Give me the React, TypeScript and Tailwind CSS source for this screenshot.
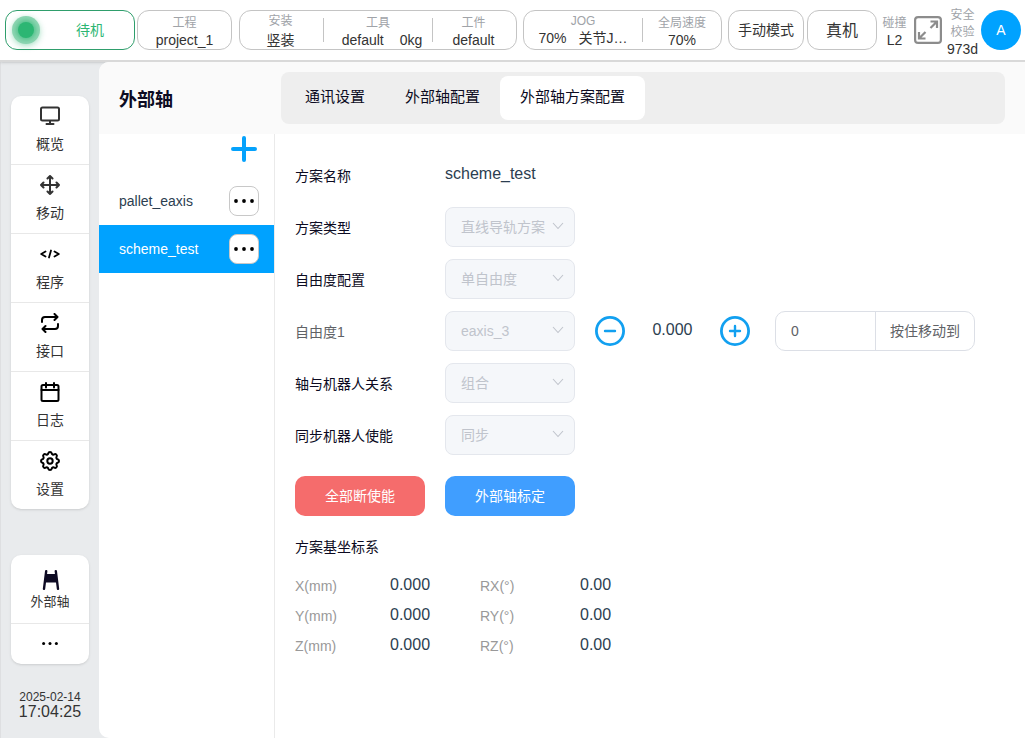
import { useState } from 'react';
import type { ReactNode } from 'react';
import clsx from 'clsx';

const Icon = ({ children, className = 'size-5' }: { children: ReactNode; className?: string }) => (
  <svg
    className={className}
    viewBox="0 0 20 20"
    fill="none"
    stroke="currentColor"
    strokeWidth="2"
    strokeLinecap="round"
    strokeLinejoin="round"
    aria-hidden="true"
  >
    {children}
  </svg>
);

const MonitorIcon = () => (
  <Icon className="size-5 text-[#333]">
    <rect x="1" y="1.5" width="18" height="13" rx="1.5" />
    <path d="M10 15v3M6.5 18h7" />
  </Icon>
);

const MoveIcon = () => (
  <Icon className="size-5 text-[#333]">
    <path d="M10 1v18M1 10h18M7.5 3.5 10 1l2.5 2.5M7.5 16.5 10 19l2.5-2.5M3.5 7.5 1 10l2.5 2.5M16.5 7.5 19 10l-2.5 2.5" />
  </Icon>
);

const CodeIcon = () => (
  <Icon className="size-5 text-black">
    <path d="M5.5 7.5 1.2 10l4.3 2.5M14.5 7.5l4.3 2.5-4.3 2.5M11 6.5l-2 7" strokeWidth="1.8" />
  </Icon>
);

const RepeatIcon = () => (
  <Icon className="size-5 text-black">
    <path d="M2 9V7a3 3 0 0 1 3-3h12M14.5 1l3 3-3 3M18 11v2a3 3 0 0 1-3 3H3M5.5 13l-3 3 3 3" />
  </Icon>
);

const CalendarIcon = () => (
  <Icon className="size-5 text-black">
    <rect x="1.5" y="3" width="17" height="16" rx="1.5" />
    <path d="M1.5 8h17M6 1v4.5M14 1v4.5" />
  </Icon>
);

const GearIcon = () => (
  <svg
    className="size-5 text-black"
    viewBox="2 2 20 20"
    fill="none"
    stroke="currentColor"
    strokeWidth="2"
    strokeLinejoin="round"
    aria-hidden="true"
  >
    <path d="M10.325 4.317c.426-1.756 2.924-1.756 3.35 0a1.724 1.724 0 0 0 2.573 1.066c1.543-.94 3.31.826 2.37 2.37a1.724 1.724 0 0 0 1.065 2.572c1.756.426 1.756 2.924 0 3.35a1.724 1.724 0 0 0-1.066 2.573c.94 1.543-.826 3.31-2.37 2.37a1.724 1.724 0 0 0-2.572 1.065c-.426 1.756-2.924 1.756-3.35 0a1.724 1.724 0 0 0-2.573-1.066c-1.543.94-3.31-.826-2.37-2.37a1.724 1.724 0 0 0-1.065-2.572c-1.756-.426-1.756-2.924 0-3.35a1.724 1.724 0 0 0 1.066-2.573c-.94-1.543.826-3.31 2.37-2.37 1 .608 2.296.07 2.572-1.065z" />
    <circle cx="12" cy="12" r="2.7" />
  </svg>
);

const RackIcon = () => (
  <svg className="size-5 text-[#0e0b24]" viewBox="0 0 20 20" aria-hidden="true">
    <path d="M6 4h10l.8 8.500H5.200z" fill="currentColor" />
    <path d="M6.200 1.200 4 18.800M15.800 1.200 18 18.800" stroke="currentColor" strokeWidth="2.4" strokeLinecap="round" />
  </svg>
);

const DotsIcon = ({ className = 'w-5' }: { className?: string }) => (
  <svg className={className} viewBox="0 0 20 4" fill="currentColor" aria-hidden="true">
    <circle cx="2" cy="2" r="1.9" />
    <circle cx="10" cy="2" r="1.9" />
    <circle cx="18" cy="2" r="1.9" />
  </svg>
);

const FullscreenIcon = () => (
  <svg className="size-7" viewBox="0 0 28 28" fill="none" stroke="#8c8c8c" strokeWidth="2.2" aria-hidden="true">
    <rect x="1.1" y="1.1" width="25.8" height="25.8" rx="3" />
    <path d="M16.500 5.500h6.500v6.500M22.500 6l-6 6M11.500 22.500H5v-6.500M5.500 22l6-6" />
  </svg>
);

const ChevronIcon = () => (
  <svg
    className="pointer-events-none absolute top-3.5 right-2.5 h-2.5 w-3.5"
    viewBox="0 0 14 10"
    fill="none"
    stroke="#c0c4cc"
    strokeWidth="1.1"
    aria-hidden="true"
  >
    <path d="M2 2l5 5.5L12 2" />
  </svg>
);

interface StatProps {
  label: string;
  tall?: boolean;
  className?: string;
  children: ReactNode;
}

const Stat = ({ label, tall = false, className, children }: StatProps) => (
  <div className={clsx('flex flex-col items-center justify-center whitespace-nowrap', className)}>
    <span className="text-xs leading-[17px] text-[#a0a3a8]">{label}</span>
    <span className={clsx('flex text-sm text-[#333]', tall ? 'leading-5' : 'leading-[17px]')}>
      {children}
    </span>
  </div>
);

const Divider = () => <span className="h-6 w-px bg-[#c4c4c4]" />;

const box = 'flex h-10 items-center rounded-xl border border-[#c4c4c4] bg-white';

const Header = () => (
  <header className="z-10 flex h-[62px] items-center border-b-2 border-[#d9d9d9] bg-white pr-1 pl-[5px] shadow-sm">
    <button className="flex h-10 w-[130px] items-center rounded-xl border border-[#2f9e6c] bg-white text-sm text-[#2cb673]">
      <span className="ml-1.5 flex size-7 items-center justify-center rounded-full bg-[#8fd6b3] shadow-[0_2px_6px_#2cb67366]">
        <span className="size-4 rounded-full bg-[#2cb673] shadow-[0_0_5px_2px_#2cb673aa]" />
      </span>
      <span className="grow pl-1.5">待机</span>
    </button>
    <div className={clsx(box, 'ml-0.5 w-[95px] justify-center')}>
      <Stat label="工程" className="pt-1">
        project_1
      </Stat>
    </div>
    <div className={clsx(box, 'ml-[7px] grow')}>
      <Stat label="安装" tall className="flex-1 pt-0.5 pr-0.5">
        竖装
      </Stat>
      <Divider />
      <Stat label="工具" className="w-[108px] pt-1">
        <span className="pl-2">default</span>
        <span className="pl-4">0kg</span>
      </Stat>
      <Divider />
      <Stat label="工件" className="flex-1 pt-1 pr-0.5">
        default
      </Stat>
    </div>
    <div className={clsx(box, 'ml-1.5 w-[199px]')}>
      <Stat label="JOG" className="grow">
        <span>70%</span>
        <span className="pl-3">关节J…</span>
      </Stat>
      <Divider />
      <Stat label="全局速度" className="w-[78px] pt-1">
        70%
      </Stat>
    </div>
    <button className={clsx(box, 'ml-1.5 w-[76px] justify-center text-sm text-[#333]')}>手动模式</button>
    <button className={clsx(box, 'ml-[3px] w-[70px] justify-center pt-0.5 text-base text-[#333]')}>真机</button>
    <Stat label="碰撞" className="w-[35px] pt-1">
      L2
    </Stat>
    <button aria-label="全屏" className="mx-0.5">
      <FullscreenIcon />
    </button>
    <div className="flex w-[37px] flex-col items-center pt-1 text-xs leading-[17px] text-[#a0a3a8]">
      <span>安全</span>
      <span>校验</span>
      <span className="text-sm leading-[17px] text-[#333]">973d</span>
    </div>
    <button className="size-10 rounded-full bg-[#00a2ff] text-sm text-white">A</button>
  </header>
);

const navItems = [
  { label: '概览', icon: <MonitorIcon /> },
  { label: '移动', icon: <MoveIcon /> },
  { label: '程序', icon: <CodeIcon /> },
  { label: '接口', icon: <RepeatIcon /> },
  { label: '日志', icon: <CalendarIcon /> },
  { label: '设置', icon: <GearIcon /> },
];

const Sidebar = () => (
  <aside className="flex w-[99px] shrink-0 flex-col border-l border-[#dedfe1] px-2.5 pt-[34px] pb-[18px]">
    <nav className="w-[78px] divide-y divide-[#e8e8e8] overflow-hidden rounded-[10px] bg-white shadow">
      {navItems.map((item) => (
        <a key={item.label} href="#" className="box-content flex h-[68px] flex-col items-center text-sm text-[#333]">
          <span className="mt-2.5">{item.icon}</span>
          <span className="mt-1 leading-7">{item.label}</span>
        </a>
      ))}
    </nav>
    <nav className="mt-[46px] w-[78px] divide-y divide-[#e8e8e8] rounded-[10px] bg-white shadow">
      <a href="#" className="box-content flex h-[68px] flex-col items-center text-[13px] text-[#333]">
        <span className="mt-[15px]">
          <RackIcon />
        </span>
        <span className="leading-6">外部轴</span>
      </a>
      <button aria-label="更多" className="box-content flex h-10 w-full items-center justify-center">
        <DotsIcon className="w-4" />
      </button>
    </nav>
    <div className="mt-auto w-[78px] pt-6 text-center text-[#333]">
      <p className="text-xs leading-[14px]">2025-02-14</p>
      <p className="text-base leading-4">17:04:25</p>
    </div>
  </aside>
);

const tabs = ['通讯设置', '外部轴配置', '外部轴方案配置'];

const PanelHeader = () => {
  const [active, setActive] = useState(tabs[2]);

  return (
    <div className="flex h-[72px] items-center bg-[#fafafa] px-5">
      <h1 className="w-[162px] shrink-0 pt-1 text-lg font-bold text-[#0c0b22]">外部轴</h1>
      <div role="tablist" className="flex grow rounded-lg bg-[#eee] p-1">
        {tabs.map((tab) => (
          <button
            key={tab}
            role="tab"
            aria-selected={tab === active}
            onClick={() => setActive(tab)}
            className={clsx(
              'h-11 rounded-lg px-5 pb-0.5 text-[15px] text-[#0c0b22]',
              tab === active && 'bg-white',
            )}
          >
            {tab}
          </button>
        ))}
      </div>
    </div>
  );
};

const schemes = ['pallet_eaxis', 'scheme_test'];

const SchemeList = () => {
  const [selected, setSelected] = useState('scheme_test');

  return (
    <div className="w-44 shrink-0 border-r border-[#eaeaea]">
      <div className="flex h-[43px] justify-end pr-[15px]">
        <button aria-label="新增方案" className="flex size-[30px] items-center justify-center text-[#05a2fc]">
          <svg className="size-[26px]" viewBox="0 0 26 26" stroke="currentColor" strokeWidth="4" strokeLinecap="round">
            <path d="M13 2v22M2 13h22" />
          </svg>
        </button>
      </div>
      <ul>
        {schemes.map((name) => (
          <li
            key={name}
            className={clsx(
              'flex h-12 items-center pr-[15px] pl-5 text-sm',
              name === selected ? 'bg-[#00a2ff] text-white' : 'text-[#2c3e50]',
            )}
          >
            <button className="grow text-left" onClick={() => setSelected(name)}>
              {name}
            </button>
            <button
              aria-label={`${name} 更多`}
              className="flex size-[30px] items-center justify-center rounded-lg border border-[#c8c8c8] bg-white text-black"
            >
              <DotsIcon />
            </button>
          </li>
        ))}
      </ul>
    </div>
  );
};

interface SelectRowProps {
  id: string;
  label: string;
  value: string;
  muted?: boolean;
  children?: ReactNode;
}

const SelectRow = ({ id, label, value, muted = false, children }: SelectRowProps) => (
  <div className="flex h-[52px] items-center">
    <label
      htmlFor={id}
      className={clsx('w-[150px] shrink-0 pt-0.5 text-sm', muted ? 'text-[#606266]' : 'text-[#0c0b22]')}
    >
      {label}
    </label>
    <div className="relative w-[130px] shrink-0">
      <select
        id={id}
        disabled
        className="h-10 w-full appearance-none rounded-lg border border-[#e4e7ed] bg-[#f5f7fa] pl-[15px] text-sm text-[#c0c4cc] opacity-100"
      >
        <option>{value}</option>
      </select>
      <ChevronIcon />
    </div>
    {children}
  </div>
);

const StepButton = ({ label, path }: { label: string; path: string }) => (
  <button aria-label={label} className="size-[30px] shrink-0 text-[#12a0f0]">
    <svg className="size-[30px]" viewBox="0 0 30 30" fill="none" stroke="currentColor" strokeLinecap="round">
      <circle cx="15" cy="15" r="13.6" strokeWidth="2.8" />
      <path d={path} strokeWidth="2.4" />
    </svg>
  </button>
);

const coordinates = [
  ['X(mm)', '0.000', 'RX(°)', '0.00'],
  ['Y(mm)', '0.000', 'RY(°)', '0.00'],
  ['Z(mm)', '0.000', 'RZ(°)', '0.00'],
];

const SchemeForm = () => (
  <section className="grow px-5 pt-[15px] pb-5">
    <div className="flex h-[52px] items-center text-[#0c0b22]">
      <span className="w-[150px] pt-0.5 text-sm">方案名称</span>
      <span className="pb-0.5 text-base text-[#2c3e50]">scheme_test</span>
    </div>
    <SelectRow id="type" label="方案类型" value="直线导轨方案" />
    <SelectRow id="dof" label="自由度配置" value="单自由度" />
    <SelectRow id="dof1" label="自由度1" value="eaxis_3" muted>
      <div className="ml-5 flex w-[155px] shrink-0 items-center justify-between">
        <StepButton label="减少" path="M10 15h10" />
        <output className="pb-0.5 text-base text-[#2c3e50]">0.000</output>
        <StepButton label="增加" path="M10 15h10M15 10v10" />
      </div>
      <div className="ml-[25px] flex h-10 w-[200px] shrink-0 overflow-hidden rounded-[10px] border border-[#dcdfe6] text-sm text-[#606266]">
        <input aria-label="目标位置" defaultValue="0" className="w-[100px] border-r border-[#dcdfe6] px-[15px]" />
        <button className="grow">按住移动到</button>
      </div>
    </SelectRow>
    <SelectRow id="relation" label="轴与机器人关系" value="组合" />
    <SelectRow id="sync" label="同步机器人使能" value="同步" />
    <div className="mt-[15px] flex gap-5 text-sm text-white">
      <button className="h-10 w-[130px] rounded-[10px] bg-[#f56c6c]">全部断使能</button>
      <button className="h-10 w-[130px] rounded-[10px] bg-[#409eff]">外部轴标定</button>
    </div>
    <h2 className="mt-5 text-sm leading-[22px] text-[#0c0b22]">方案基坐标系</h2>
    <table className="mt-3 table-fixed border-collapse">
      <tbody>
        {coordinates.map(([axis, position, rotation, angle]) => (
          <tr key={axis} className="h-[30px] text-left text-base text-[#2c3e50]">
            <th scope="row" className="w-[95px] pt-0.5 text-sm font-normal text-[#999]">
              {axis}
            </th>
            <td className="w-[90px]">{position}</td>
            <th scope="row" className="w-[100px] pt-0.5 text-sm font-normal text-[#999]">
              {rotation}
            </th>
            <td>{angle}</td>
          </tr>
        ))}
      </tbody>
    </table>
  </section>
);

export default function App() {
  return (
    <div className="flex min-h-screen flex-col bg-[#e9ebed] font-['Liberation_Sans','Noto_Sans_CJK_SC',sans-serif]">
      <Header />
      <div className="flex grow">
        <Sidebar />
        <main className="z-20 flex min-w-0 grow flex-col overflow-hidden rounded-l-[10px] bg-white">
          <PanelHeader />
          <div className="flex grow">
            <SchemeList />
            <SchemeForm />
          </div>
        </main>
      </div>
    </div>
  );
}
